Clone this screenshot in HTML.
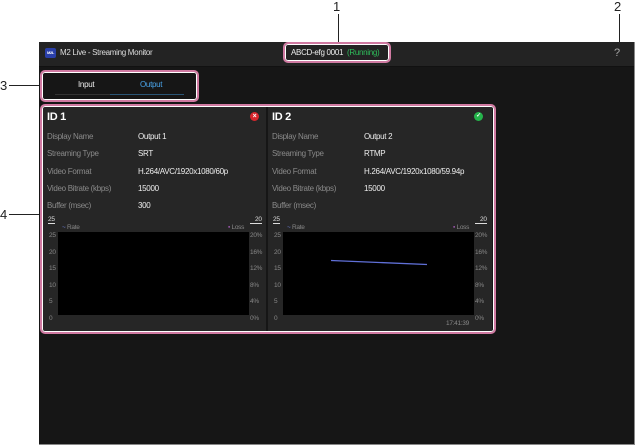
<!DOCTYPE html>
<html><head><meta charset="utf-8"><style>
*{margin:0;padding:0;box-sizing:border-box}
body{width:635px;height:445px;background:#fff;position:relative;overflow:hidden;font-family:"Liberation Sans",sans-serif;font-size:8px;color:#ddd;letter-spacing:-0.3px}
.a{position:absolute}
.pk{position:absolute;border:2px solid #d07aa2;border-radius:5px;box-shadow:inset 0 0 0 1px #fff}
.lbl{color:#8a8a8a}
.val{color:#eee}
.num{position:absolute;font-size:13px;color:#222;letter-spacing:0}
.ax{position:absolute;font-size:6.5px;color:#888}
</style></head><body>
<div class="num" style="left:333px;top:-1px">1</div>
<div class="a" style="left:338px;top:14px;width:1px;height:30px;background:#222"></div>
<div class="num" style="left:614px;top:-1px">2</div>
<div class="a" style="left:619px;top:14px;width:1px;height:30px;background:#222"></div>
<div class="a" style="left:617px;top:42px;width:5px;height:5px;border-radius:50%;background:#d07aa2"></div>
<div class="num" style="left:0;top:78px">3</div>
<div class="a" style="left:9px;top:85px;width:31px;height:1px;background:#222"></div>
<div class="num" style="left:0;top:207px">4</div>
<div class="a" style="left:9px;top:214px;width:31px;height:1px;background:#222"></div>

<div class="a" style="left:39px;top:42px;width:596px;height:403px;background:#161616;border-right:1px solid #888;border-bottom:1px solid #888"></div>
<div class="a" style="left:39px;top:42px;width:595px;height:25px;background:#232323;border-bottom:1px solid #111"></div>
<div class="a" style="left:45px;top:48px;width:11px;height:10px;background:#2a3fa8;border-radius:2px;font-size:4px;color:#fff;line-height:10px;text-align:center;font-weight:bold">M2L</div>
<div class="a" style="left:60px;top:48px;color:#ddd">M2 Live - Streaming Monitor</div>
<div class="a" style="left:291px;top:48px;color:#eee">ABCD-efg 0001&nbsp; <span style="color:#2ebd5a">(Running)</span></div>
<div class="pk" style="left:283px;top:42px;width:108px;height:21px"></div>
<div class="a" style="left:614px;top:47px;font-size:11px;color:#aaa">?</div>

<div class="a" style="left:78px;top:80px;color:#eee">Input</div>
<div class="a" style="left:140px;top:80px;color:#4aa3e8">Output</div>
<div class="a" style="left:55px;top:94px;width:55px;height:1px;background:#333"></div>
<div class="a" style="left:110px;top:94px;width:74px;height:1px;background:#2a5575"></div>
<div class="pk" style="left:40px;top:70px;width:159px;height:32px"></div>

<div class="a" style="left:42px;top:107px;width:224px;height:224px;background:#262626"></div>
<div class="a" style="left:268px;top:107px;width:224px;height:224px;background:#262626"></div>
<div class="a" style="left:47px;top:111px;font-size:11px;font-weight:bold;color:#fff">ID 1</div>
<div class="a" style="left:250px;top:112px;width:9px;height:9px;border-radius:50%;background:#d8262c;color:#fff;font-size:7px;line-height:9px;text-align:center;font-weight:bold">×</div>
<div class="a" style="left:272px;top:111px;font-size:11px;font-weight:bold;color:#fff">ID 2</div>
<div class="a" style="left:474px;top:112px;width:9px;height:9px;border-radius:50%;background:#25b34b;color:#fff;font-size:6px;line-height:9px;text-align:center;font-weight:bold">✓</div>

<div class="a lbl" style="left:47px;top:128px;line-height:17.3px">Display Name<br>Streaming Type<br>Video Format<br>Video Bitrate (kbps)<br>Buffer (msec)</div>
<div class="a val" style="left:138px;top:128px;line-height:17.3px">Output 1<br>SRT<br>H.264/AVC/1920x1080/60p<br>15000<br>300</div>
<div class="a lbl" style="left:272px;top:128px;line-height:17.3px">Display Name<br>Streaming Type<br>Video Format<br>Video Bitrate (kbps)<br>Buffer (msec)</div>
<div class="a val" style="left:364px;top:128px;line-height:17.3px">Output 2<br>RTMP<br>H.264/AVC/1920x1080/59.94p<br>15000</div>

<div class="ax" style="left:48px;top:216px;color:#ddd;border-bottom:1px solid #ddd">25</div>
<div class="ax" style="left:250px;top:216px;color:#ddd;border-bottom:1px solid #ddd;padding-left:5px">20</div>
<div class="ax" style="left:62px;top:224px"><span style="color:#6f7fd8">~</span> Rate</div>
<div class="ax" style="left:228px;top:224px"><span style="color:#9955aa">▪</span> Loss</div>
<div class="a" style="left:58px;top:232px;width:191px;height:83px;background:#000"></div>
<div class="ax" style="left:49px;top:228px;line-height:16.6px">25<br>20<br>15<br>10<br>5<br>0</div>
<div class="ax" style="left:250px;top:228px;line-height:16.6px">20%<br>16%<br>12%<br>8%<br>4%<br>0%</div>

<div class="ax" style="left:273px;top:216px;color:#ddd;border-bottom:1px solid #ddd">25</div>
<div class="ax" style="left:475px;top:216px;color:#ddd;border-bottom:1px solid #ddd;padding-left:5px">20</div>
<div class="ax" style="left:287px;top:224px"><span style="color:#6f7fd8">~</span> Rate</div>
<div class="ax" style="left:453px;top:224px"><span style="color:#9955aa">▪</span> Loss</div>
<div class="a" style="left:283px;top:232px;width:191px;height:83px;background:#000"></div>
<svg class="a" style="left:283px;top:232px" width="191" height="83"><line x1="48" y1="28.5" x2="144" y2="32.5" stroke="#6070d8" stroke-width="1.3"/></svg>
<div class="ax" style="left:274px;top:228px;line-height:16.6px">25<br>20<br>15<br>10<br>5<br>0</div>
<div class="ax" style="left:475px;top:228px;line-height:16.6px">20%<br>16%<br>12%<br>8%<br>4%<br>0%</div>
<div class="ax" style="left:446px;top:320px">17:41:39</div>
<div class="pk" style="left:40px;top:104px;width:456px;height:230px"></div>
</body></html>
